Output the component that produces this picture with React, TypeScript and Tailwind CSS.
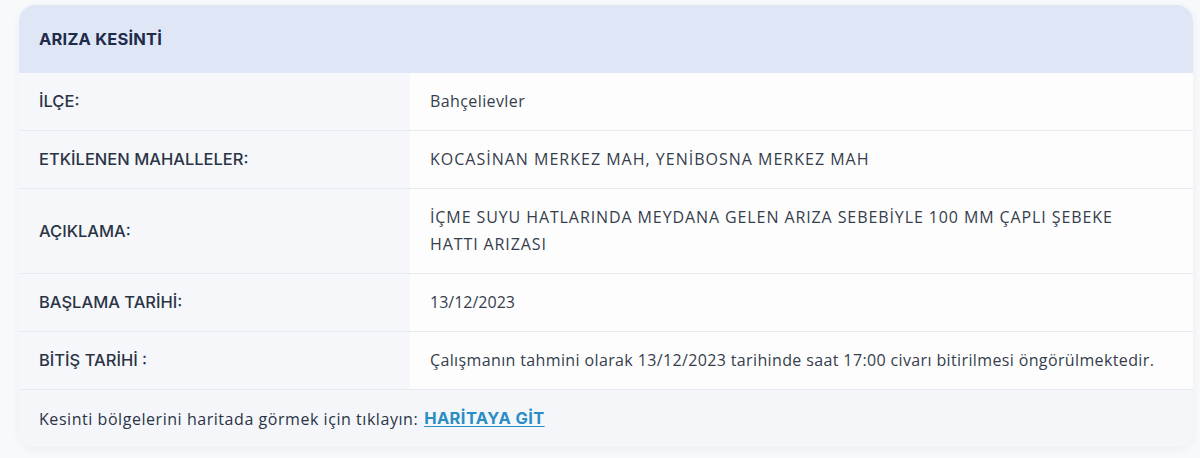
const rows: { label: string; value: string[]; track: string }[] = [
  { label: "İLÇE:", value: ["Bahçelievler"], track: "tracking-[0.4px]" },
  { label: "ETKİLENEN MAHALLELER:", value: ["KOCASİNAN MERKEZ MAH, YENİBOSNA MERKEZ MAH"], track: "tracking-[1px]" },
  {
    label: "AÇIKLAMA:",
    value: ["İÇME SUYU HATLARINDA MEYDANA GELEN ARIZA SEBEBİYLE 100 MM ÇAPLI ŞEBEKE", "HATTI ARIZASI"],
    track: "tracking-[0.9px]",
  },
  { label: "BAŞLAMA TARİHİ:", value: ["13/12/2023"], track: "" },
  {
    label: "BİTİŞ TARİHİ :",
    value: ["Çalışmanın tahmini olarak 13/12/2023 tarihinde saat 17:00 civarı bitirilmesi öngörülmektedir."],
    track: "tracking-[0.37px]",
  },
];

export default function App() {
  return (
    <div className="w-[1200px] h-[458px] bg-[#f8f9fb] pt-[5px] pl-[19px] font-['Inter',sans-serif]">
      <div className="w-[1174px] rounded-2xl overflow-hidden bg-white shadow-[0_2px_8px_rgba(30,50,90,0.06)]">
        {/* header */}
        <div className="h-[68px] flex items-center px-5 bg-[#dfe7f6]">
          <h2 className="text-[16.5px] font-bold text-[#1f2b4a] tracking-[0.2px]">ARIZA KESİNTİ</h2>
        </div>

        {rows.map((r) => (
          <div key={r.label} className="flex border-b border-[#e7eaf0]">
            <div className="w-[391px] shrink-0 bg-[#f5f7fa] px-5 flex items-center text-[16.5px] font-medium text-[#2b3445]">
              {r.label}
            </div>
            <div
              className={`flex-1 bg-[#fdfdfe] px-5 py-[15px] leading-[27px] text-[16px] text-[#363e4b] font-['Open_Sans',sans-serif] ${r.track}`}
            >
              {r.value.map((v) => (
                <div key={v}>{v}</div>
              ))}
            </div>
          </div>
        ))}

        {/* footer */}
        <div className="h-[57px] flex items-center px-5 bg-[#f4f6fa] text-[16px] tracking-[0.55px] text-[#2b3445] font-['Open_Sans',sans-serif]">
          <span>Kesinti bölgelerini haritada görmek için tıklayın:</span>
          <a
            href="#"
            className="ml-[6px] font-bold tracking-[0.4px] text-[#2a8ec4] underline underline-offset-2 font-['Inter',sans-serif] text-[16.5px]"
          >
            HARİTAYA GİT
          </a>
        </div>
      </div>
    </div>
  );
}
